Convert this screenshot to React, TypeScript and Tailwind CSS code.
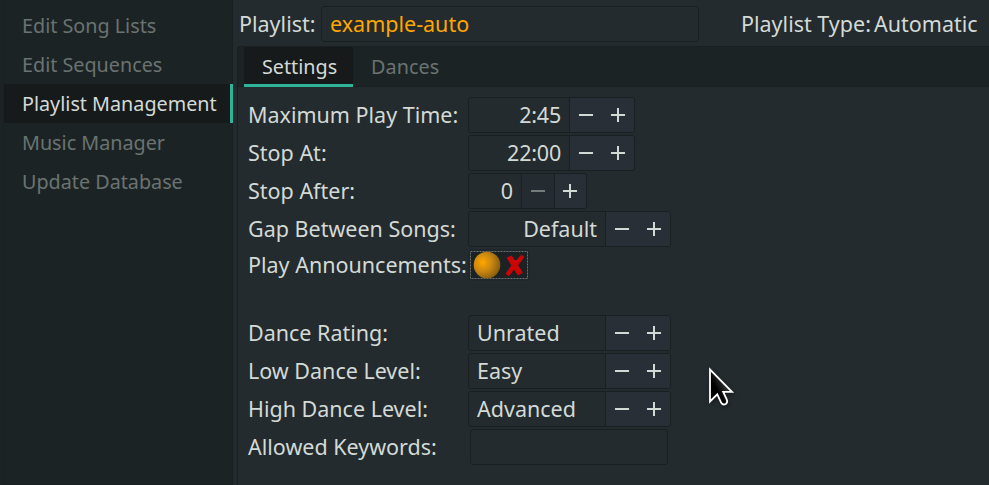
import { ReactNode } from "react";

const LINE = "border-[#1a2022]";

function Minus({ dim = false }: { dim?: boolean }) {
  return (
    <svg width="14" height="14" viewBox="0 0 14 14" fill={dim ? "#727c7b" : "#d3dad6"} shapeRendering="crispEdges">
      <rect x="0" y="6" width="14" height="2" />
    </svg>
  );
}

function Plus() {
  return (
    <svg width="14" height="14" viewBox="0 0 14 14" fill="#d3dad6" shapeRendering="crispEdges">
      <rect x="0" y="6" width="14" height="2" />
      <rect x="6" y="0" width="2" height="14" />
    </svg>
  );
}

type SpinProps = { value: string; field: string; right?: boolean; dimMinus?: boolean };

function Spin({ value, field, right = false, dimMinus = false }: SpinProps) {
  return (
    <div className={`flex h-9 overflow-hidden rounded-[3px] border ${LINE}`}>
      <div className={`flex items-center px-2 whitespace-nowrap ${field} ${right ? "justify-end" : ""}`}>{value}</div>
      <div className={`flex w-[33px] items-center justify-center border-l ${LINE} ${dimMinus ? "bg-[#252c31]" : "bg-[#282f37]"}`}>
        <Minus dim={dimMinus} />
      </div>
      <div className={`flex w-8 items-center bg-[#282f37] ${dimMinus ? `border-l pl-[8px] ${LINE}` : "pl-[9px]"}`}>
        <Plus />
      </div>
    </div>
  );
}

function Row({ label, children }: { label: string; children: ReactNode }) {
  return (
    <div className="flex h-[38px] items-center">
      <div className="w-[220px] shrink-0 whitespace-nowrap">{label}</div>
      {children}
    </div>
  );
}

function Toggle() {
  return (
    <div className="ml-0.5 rounded-[3px] shadow-[0_0_0_2px_#20272a]">
      <svg width="58" height="28" viewBox="0 0 58 28" className="block">
        <defs>
          <radialGradient id="knob" cx="0.34" cy="0.4" r="0.7">
            <stop offset="0" stopColor="#ffa600" />
            <stop offset="0.5" stopColor="#c98611" />
            <stop offset="1" stopColor="#80590f" />
          </radialGradient>
        </defs>
        <rect width="58" height="28" fill="#1c2224" />
        <rect x="0.5" y="0.5" width="57" height="27" fill="none" stroke="#6b7575" strokeDasharray="2 1" />
        <circle cx="17" cy="14" r="13.3" fill="url(#knob)" />
        <path d="M37.2 6.8 41.5 5.1 45.4 10.8 51.2 4.2 53.9 5.9 47.7 14.2 52.3 21.6 48.1 23.9 44 17.8 38.8 24.7 36 22.8 41.8 14.5Z" fill="#cb0505" stroke="#cb0505" strokeLinejoin="round" />
      </svg>
    </div>
  );
}

const pages = ["Edit Song Lists", "Edit Sequences", "Playlist Management", "Music Manager", "Update Database"];

export default function App() {
  return (
    <div className="relative flex h-[485px] w-[989px] overflow-hidden bg-[#242b2e] font-['Noto_Sans',sans-serif] text-[21.5px] leading-[30px] text-[#d3dad6]">
      <nav className={`ml-[3px] w-[230px] shrink-0 border-x border-b bg-[#1c2325] pt-1.5 text-[19.75px] shadow-[-3px_0_0_#1c2325] ${LINE}`}>
        {pages.map((p) => (
          <div
            key={p}
            className={`flex h-[39px] items-center whitespace-nowrap pl-[18px] ${
              p === "Playlist Management" ? "-mr-px border-r-[3px] border-[#2eb398] bg-[#171a1b]" : "text-[#6a7371]"
            }`}
          >
            {p}
          </div>
        ))}
      </nav>
      <main className="ml-1 flex min-w-0 flex-1 flex-col">
        <header className="flex h-[46px] items-center pt-0.5 pl-0.5">
          <span className="w-[82px] whitespace-nowrap">Playlist:</span>
          <div className={`flex h-9 w-[378px] items-center rounded-[3px] border pl-2 text-[#ffa600] ${LINE}`}>example-auto</div>
          <span className="ml-[42px] w-[133px] whitespace-nowrap">Playlist Type:</span>
          <span className="whitespace-nowrap">Automatic</span>
        </header>
        <section className={`flex-1 rounded-tl-[2px] border-t border-l ${LINE}`}>
          <div className={`flex h-10 border-b bg-[#1c2325] pl-1.5 text-[19.75px] ${LINE}`}>
            <div className="z-10 flex h-10 w-[109px] items-center border-b-[3px] border-[#2eb398] bg-[#171a1b] pt-[3px] pl-[18px]">Settings</div>
            <div className="flex h-10 items-center pl-[18px] tracking-[0.1px] text-[#6a7371]">Dances</div>
          </div>
          <div className="pt-[9px] pl-2.5">
            <Row label="Maximum Play Time:"><Spin value="2:45" field="w-[100px] tracking-[-0.2px]" right /></Row>
            <Row label="Stop At:"><Spin value="22:00" field="w-[100px] tracking-[-0.2px]" right /></Row>
            <Row label="Stop After:"><Spin value="0" field="w-[52px]" right dimMinus /></Row>
            <Row label="Gap Between Songs:"><Spin value="Default" field="w-[136px]" right /></Row>
            <div className="-mt-0.5 mb-[30px]"><Row label="Play Announcements:"><Toggle /></Row></div>
            <Row label="Dance Rating:"><Spin value="Unrated" field="w-[136px]" /></Row>
            <Row label="Low Dance Level:"><Spin value="Easy" field="w-[136px]" /></Row>
            <Row label="High Dance Level:"><Spin value="Advanced" field="w-[136px]" /></Row>
            <Row label="Allowed Keywords:"><div className={`ml-0.5 h-9 w-[198px] rounded-[3px] border ${LINE}`} /></Row>
          </div>
        </section>
      </main>
      <svg className="absolute top-[364px] left-[706px] drop-shadow-[1px_2px_2px_rgba(0,0,0,0.4)]" width="32" height="46" viewBox="0 0 32 46">
        <defs>
          <linearGradient id="arrow" x1="0.1" y1="0.7" x2="0.7" y2="0.2">
            <stop offset="0.3" stopColor="#000" />
            <stop offset="1" stopColor="#444" />
          </linearGradient>
        </defs>
        <path d="M4 5.5V37.5L11.3 30.4L15.2 38.8Q17 41.5 19.8 40Q22 38.5 20.8 35.7L17.2 27.8H26Z" fill="url(#arrow)" stroke="#fff" strokeWidth="1.8" />
      </svg>
    </div>
  );
}
